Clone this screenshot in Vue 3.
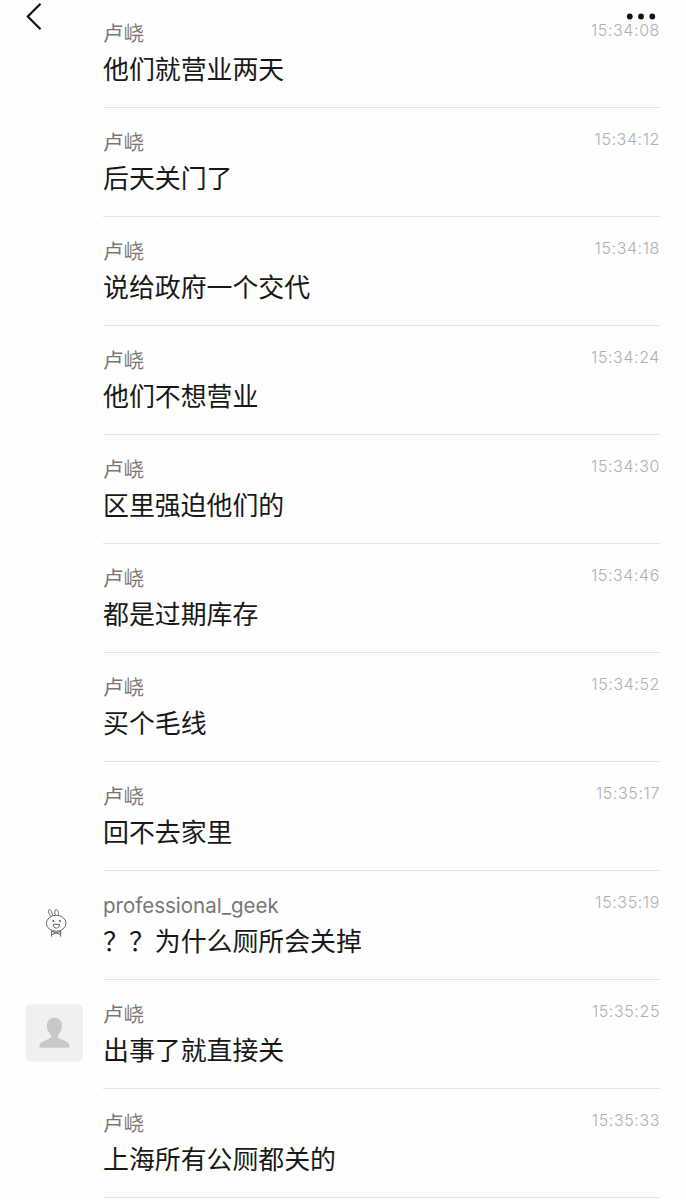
<script setup>
import { ref } from 'vue'

const messages = ref([
  { name: '卢峣', text: '他们就营业两天', time: '15:34:08' },
  { name: '卢峣', text: '后天关门了', time: '15:34:12' },
  { name: '卢峣', text: '说给政府一个交代', time: '15:34:18' },
  { name: '卢峣', text: '他们不想营业', time: '15:34:24' },
  { name: '卢峣', text: '区里强迫他们的', time: '15:34:30' },
  { name: '卢峣', text: '都是过期库存', time: '15:34:46' },
  { name: '卢峣', text: '买个毛线', time: '15:34:52' },
  { name: '卢峣', text: '回不去家里', time: '15:35:17' },
  { name: 'professional_geek', text: '？？为什么厕所会关掉', time: '15:35:19', avatar: 'rabbit' },
  { name: '卢峣', text: '出事了就直接关', time: '15:35:25', avatar: 'default' },
  { name: '卢峣', text: '上海所有公厕都关的', time: '15:35:33' },
])
</script>

<template>
  <main>
    <!-- floating nav, sits over the scrolled list -->
    <header>
      <svg class="back" viewBox="0 0 18 30" aria-label="back">
        <path d="M15.500 2.800 L2.800 15.500 L15.500 28.200" />
      </svg>
      <svg class="more" viewBox="0 0 30 8" aria-label="more">
        <circle cx="3.800" cy="4.500" r="2.900" />
        <circle cx="15" cy="4.500" r="2.900" />
        <circle cx="26.300" cy="4.500" r="2.900" />
      </svg>
    </header>

    <ul>
      <li v-for="msg in messages" :key="msg.time">
        <div class="side">
          <svg v-if="msg.avatar === 'rabbit'" class="avatar rabbit" viewBox="0 0 58 58">
            <path d="M26 21.500 C23.600 19 22.800 15 24.200 14.600 C26.200 14.300 27 17.500 27.600 20.500" />
            <path d="M30.200 20.300 C29.600 17.500 29.600 14.600 31.200 14.600 C33 14.600 33.500 17.500 33.500 20.800" />
            <ellipse cx="31.200" cy="28.300" rx="9.800" ry="8" />
            <path d="M28.300 29.300 H34.500 C34.500 31.800 33.500 33 31.400 33 C29.300 33 28.300 31.800 28.300 29.300 Z" />
            <circle class="eye" cx="28.300" cy="26" r="0.900" />
            <circle class="eye" cx="35" cy="26" r="0.900" />
            <path d="M26.600 36.200 V41.700 M35.600 36.200 V41.700 M26.600 36.200 L31.200 38 L35.600 36.200 V39.600 L31.200 38 L26.600 39.600" />
          </svg>
          <svg v-if="msg.avatar === 'default'" class="avatar" viewBox="0 0 58 58">
            <rect class="tile" x="0.500" y="0.200" width="57.500" height="57.200" rx="4.500" />
            <path
              class="person"
              d="M29.500 13.700 C24.800 13.700 21.900 17.200 21.900 21.700 C21.900 25.500 23.400 28.200 25.400 30.200 C26.900 32.200 26.400 33.500 24.400 34.500 L17.400 37.700 C14.900 38.900 14.500 40.200 14.500 43.700 H44.400 C44.400 40.200 44 38.900 41.500 37.700 L34.500 34.500 C32.500 33.500 32 32.200 33.500 30.200 C35.500 28.200 37 25.500 37 21.700 C37 17.200 34.200 13.700 29.500 13.700 Z"
            />
          </svg>
        </div>
        <div class="body">
          <div class="content">
            <span class="name">{{ msg.name }}</span>
            <p>{{ msg.text }}</p>
          </div>
          <time>{{ msg.time }}</time>
        </div>
      </li>
    </ul>
  </main>
</template>

<style>
body {
  background: #fefefe;
}
</style>

<style scoped>
main {
  position: relative;
  height: 1200px;
  overflow: hidden;
  background: #fefefe;
  font-family: Inter, "Noto Sans CJK SC", sans-serif;
}

header {
  position: absolute;
  top: 0;
  left: 0;
  right: 0;
  display: flex;
  justify-content: space-between;
  padding: 1px 30px 0 25px;
}

.back {
  width: 18px;
  height: 30px;
  fill: none;
  stroke: #111;
  stroke-width: 2.2;
}

.more {
  width: 30px;
  height: 8px;
  margin-top: 11px;
  fill: #111;
}

ul {
  list-style: none;
  margin: -1px 0 0;
  padding: 0;
}

li {
  display: flex;
  height: 109px;
  padding: 0 26px 0 25px;
}

.side {
  width: 78px;
  flex: none;
  padding-top: 24px;
}

.avatar {
  display: block;
  width: 58px;
  height: 58px;
}

.rabbit {
  fill: none;
  stroke: #666;
  stroke-width: 1;
}

.rabbit .eye {
  fill: #444;
  stroke: none;
}

.tile {
  fill: #f0f0f0;
}

.person {
  fill: #c8c8c8;
}

.body {
  flex: 1;
  display: flex;
  justify-content: space-between;
  box-sizing: border-box;
  border-bottom: 1px solid #e4e4e4;
}

.content {
  padding-top: 21px;
}

.name {
  display: block;
  font-size: 20.5px;
  line-height: 28px;
  color: #777;
}

p {
  margin: 2px 0 0;
  font-family: "Noto Sans CJK SC", sans-serif;
  font-size: 25.9px;
  line-height: 36px;
  color: #181818;
}

time {
  padding-top: 21px;
  font-size: 16px;
  font-weight: 350;
  line-height: 20px;
  letter-spacing: 0.6px;
  color: #b0b0b0;
}
</style>
